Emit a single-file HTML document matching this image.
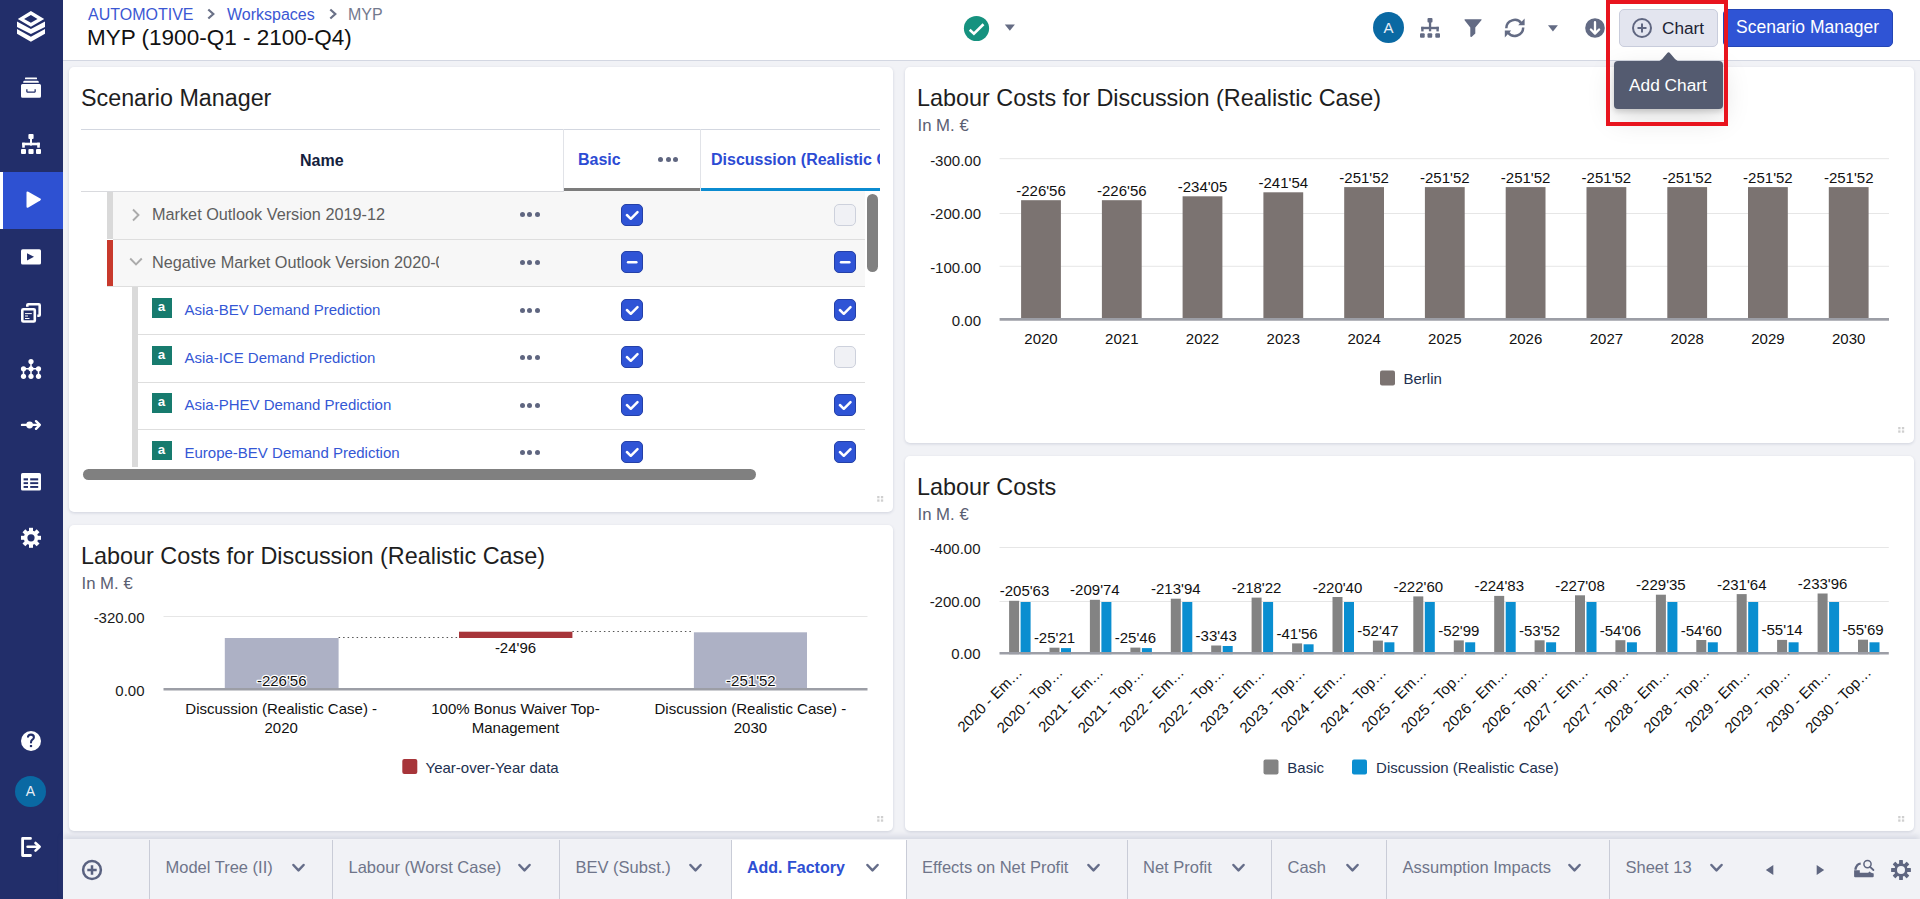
<!DOCTYPE html>
<html><head><meta charset="utf-8">
<style>
*{box-sizing:border-box;margin:0;padding:0}
html,body{width:1920px;height:899px;overflow:hidden;background:#f1f2f6;font-family:"Liberation Sans",sans-serif;color:#111}
.abs{position:absolute}
#sb{position:absolute;left:0;top:0;width:63px;height:899px;background:#222e6a}
#sb .act{position:absolute;left:3px;top:172px;width:60px;height:57px;background:#2e51d2}
#sb .actbar{position:absolute;left:0;top:172px;width:3px;height:57px;background:#fff}
#hdr{position:absolute;left:63px;top:0;width:1857px;height:61px;background:#fff;border-bottom:1px solid #d3d7e2}
.card{position:absolute;background:#fff;border-radius:5px;box-shadow:0 1px 3px rgba(60,70,110,.18)}
.ttl{position:absolute;font-size:23.3px;color:#1e1e1e;white-space:nowrap}
.sub{position:absolute;font-size:15.5px;color:#5b6072;white-space:nowrap}
#bar{position:absolute;left:63px;top:839px;width:1857px;height:60px;background:#f1f2f6;box-shadow:0 -3px 6px rgba(90,100,140,.18)}
.tab{position:absolute;top:838px;height:61px;border-left:1px solid #d3d6df;font-size:16.5px;color:#6b7186;white-space:nowrap}
.t{position:absolute;white-space:nowrap}
.cb{position:absolute;width:22px;height:22px;border-radius:5px;background:#2f54d6;border:1px solid #2440a8}
.cb.u{background:#f0f1f5;border:1px solid #cdd1dc}
.cb svg{position:absolute;left:0;top:0}
.dots{position:absolute;width:21px;height:6px}
.dots i{position:absolute;top:0;width:5px;height:5px;border-radius:50%;background:#5f6680}
.rl{position:absolute;height:1px;background:#dcdde2}
</style></head>
<body>
<div id="sb">
  <div class="actbar"></div><div class="act"></div>
  <svg class="abs" style="left:14px;top:8px" width="34" height="38" viewBox="0 0 34 38" fill="#fff">
    <path fill-rule="evenodd" d="M16.9 3L30.2 11L16.9 18.8L3.8 11Z M16.9 7L10.1 10.9L16.9 14.8L23.5 10.9Z"/>
    <path d="M3 13.5L16.9 21.1L31 13.5L31 19L16.9 26L3 19Z"/>
    <path d="M3 21.1L16.9 28.8L31 21.1L31 25.8L16.9 33.8L3 25.8Z"/>
  </svg>
  <svg class="abs" style="left:16px;top:74px" width="30" height="30" viewBox="0 0 30 30" fill="#fff">
    <rect x="9" y="3.6" width="12" height="1.6" rx=".5"/>
    <path d="M8.6 6.8H21.4Q22.8 6.8 22.8 8.2V8.8H7.2V8.2Q7.2 6.8 8.6 6.8Z"/>
    <path fill-rule="evenodd" d="M6.5 10H23.5Q25 10 25 11.5V22.3Q25 23.8 23.5 23.8H6.5Q5 23.8 5 22.3V11.5Q5 10 6.5 10Z M10.2 15.2V17.6Q10.2 18.7 11.3 18.7H18.7Q19.8 18.7 19.8 17.6V15.2H18.5V17.4H11.5V15.2Z"/>
  </svg>
  <svg class="abs" style="left:16px;top:129px" width="30" height="30" viewBox="0 0 30 30" fill="#fff">
    <rect x="12.4" y="5" width="5.2" height="5" rx="1"/>
    <rect x="14" y="9.5" width="2" height="7"/>
    <rect x="6.2" y="13.7" width="17.6" height="2.6"/>
    <rect x="6.2" y="13.7" width="2.6" height="5"/>
    <rect x="21.2" y="13.7" width="2.6" height="5"/>
    <rect x="5" y="20" width="5" height="5" rx="1"/>
    <rect x="12.4" y="20" width="5.2" height="5" rx="1"/>
    <rect x="20" y="20" width="5" height="5" rx="1"/>
  </svg>
  <svg class="abs" style="left:16px;top:185px" width="30" height="30" viewBox="0 0 30 30" fill="#fff">
    <path d="M10.5 7.8Q10.5 5.8 12.3 6.8L24.2 13.6Q25.8 14.6 24.2 15.6L12.3 22.5Q10.5 23.5 10.5 21.5Z"/>
  </svg>
  <svg class="abs" style="left:16px;top:242px" width="30" height="30" viewBox="0 0 30 30">
    <rect x="5" y="7.3" width="20" height="15.2" rx="1.6" fill="#fff"/>
    <path d="M11 11.3L18 14.8L11 18.5Z" fill="#222e6a"/>
  </svg>
  <svg class="abs" style="left:16px;top:298px" width="30" height="30" viewBox="0 0 30 30" fill="none" stroke="#fff">
    <path d="M11.3 8.8V7.2Q11.3 6.3 12.2 6.3H22.8Q23.7 6.3 23.7 7.2V17Q23.7 17.8 22.8 17.8H21.3" stroke-width="2.6"/>
    <rect x="6.3" y="11.3" width="12.5" height="12.2" rx="1" stroke-width="2.6"/>
    <path d="M9 15.6H15.8M9 18H12M9 20.5H13.5" stroke-width="1"/>
  </svg>
  <svg class="abs" style="left:16px;top:354px" width="30" height="30" viewBox="0 0 30 30" fill="#fff" stroke="#fff">
    <path d="M15 7.5V22.3M7.5 14.8H22.5M7.5 14.8V22.3M22.5 14.8V22.3" stroke-width="1.5"/>
    <circle cx="15" cy="7.5" r="2.6" stroke="none"/><circle cx="15" cy="14.8" r="2.6" stroke="none"/>
    <circle cx="7.5" cy="14.8" r="2.6" stroke="none"/><circle cx="22.5" cy="14.8" r="2.6" stroke="none"/>
    <circle cx="7.5" cy="22.3" r="2.6" stroke="none"/><circle cx="15" cy="22.3" r="2.6" stroke="none"/>
    <circle cx="22.5" cy="22.3" r="2.6" stroke="none"/>
  </svg>
  <svg class="abs" style="left:16px;top:410px" width="30" height="30" viewBox="0 0 30 30" fill="#fff" stroke="#fff">
    <path d="M6 14.9H23" stroke-width="2.4" stroke-linecap="round"/>
    <circle cx="13.6" cy="15" r="3.4" stroke="none"/>
    <path d="M20 11.2L23.8 14.9L20 18.8" stroke-width="2.4" fill="none" stroke-linecap="round" stroke-linejoin="round"/>
  </svg>
  <svg class="abs" style="left:16px;top:467px" width="30" height="30" viewBox="0 0 30 30">
    <rect x="5" y="6" width="20" height="17.6" rx="1.6" fill="#fff"/>
    <g fill="#222e6a"><rect x="7.6" y="11.3" width="4.4" height="2.1"/><rect x="14.2" y="11.3" width="8" height="2.1"/>
    <rect x="7.6" y="15.2" width="4.4" height="1.9"/><rect x="14.2" y="15.2" width="8" height="1.9"/>
    <rect x="7.6" y="19" width="4.4" height="1.9"/><rect x="14.2" y="19" width="8" height="1.9"/></g>
  </svg>
  <svg class="abs" style="left:16px;top:523px" width="30" height="30" viewBox="0 0 30 30">
    <g fill="#fff" transform="translate(15 14.8)">
      <circle r="7.2"/>
      <rect x="-2" y="-10" width="4" height="20"/>
      <rect x="-2" y="-10" width="4" height="20" transform="rotate(45)"/>
      <rect x="-2" y="-10" width="4" height="20" transform="rotate(90)"/>
      <rect x="-2" y="-10" width="4" height="20" transform="rotate(135)"/>
      <circle r="3.6" fill="#222e6a"/>
    </g>
  </svg>
  <svg class="abs" style="left:16px;top:726px" width="30" height="30" viewBox="0 0 30 30">
    <circle cx="15" cy="15" r="10" fill="#fff"/>
    <path d="M12 10.8Q12.5 8.6 15 8.6Q17.9 8.6 17.9 11.2Q17.9 12.7 16.4 13.7Q15 14.6 15 16.5" fill="none" stroke="#222e6a" stroke-width="2.1" stroke-linecap="round"/>
    <rect x="13.9" y="19" width="2.2" height="2.1" fill="#222e6a"/>
  </svg>
  <div class="abs" style="left:15px;top:776px;width:31px;height:31px;border-radius:50%;background:#0a69a3;color:#e8eef6;font-size:14px;text-align:center;line-height:31px">A</div>
  <svg class="abs" style="left:14px;top:830px" width="34" height="34" viewBox="0 0 34 34" fill="none" stroke="#fff" stroke-width="2.8">
    <path d="M16.5 8.4H8.6V25.5H16.5" stroke-linecap="round" stroke-linejoin="round"/>
    <path d="M13.6 16.7H25" stroke-width="2.6" stroke-linecap="round"/>
    <path d="M21.5 13L25.6 16.7L21.5 20.6" stroke-width="2.6" stroke-linecap="round" stroke-linejoin="round"/>
  </svg>
</div>
<div id="hdr"></div>
<div class="t" style="left:88px;top:6.5px;font-size:16px;line-height:16px;color:#3b57d3">AUTOMOTIVE</div>
<svg class="abs" style="left:205px;top:7px" width="12" height="14" viewBox="0 0 12 14"><path d="M3.3 2.5L8.3 7L3.3 11.5" fill="none" stroke="#6b7288" stroke-width="2.2"/></svg>
<div class="t" style="left:227px;top:6.5px;font-size:16px;line-height:16px;color:#3b57d3">Workspaces</div>
<svg class="abs" style="left:327px;top:7px" width="12" height="14" viewBox="0 0 12 14"><path d="M3.3 2.5L8.3 7L3.3 11.5" fill="none" stroke="#6b7288" stroke-width="2.2"/></svg>
<div class="t" style="left:348px;top:6.5px;font-size:16px;line-height:16px;color:#737a8e">MYP</div>
<div class="t" style="left:87px;top:27.3px;font-size:22.5px;line-height:22.5px;color:#111">MYP (1900-Q1 - 2100-Q4)</div>
<svg class="abs" style="left:960px;top:12px" width="60" height="34" viewBox="0 0 60 34">
  <circle cx="16.5" cy="16.5" r="12.6" fill="#16927f"/>
  <path d="M9.7 17.8L13.9 21.6L23.5 12.2" fill="none" stroke="#fff" stroke-width="2.6"/>
  <path d="M44.8 12.5H54.9L49.85 18.7Z" fill="#656c84"/>
</svg>
<div class="abs" style="left:1373px;top:11.5px;width:31px;height:31px;border-radius:50%;background:#0a69a3;color:#e8eef6;font-size:15px;text-align:center;line-height:31px">A</div>
<svg class="abs" style="left:1415px;top:12px" width="200" height="32" viewBox="0 0 200 32" fill="#636b84">
  <rect x="12.5" y="5.9" width="5" height="4.7" rx="1"/>
  <rect x="13.9" y="10" width="2.3" height="9.3"/>
  <rect x="6.2" y="14.8" width="17.6" height="2.4"/>
  <rect x="6.2" y="14.8" width="2.4" height="4.6"/>
  <rect x="21.4" y="14.8" width="2.4" height="4.6"/>
  <rect x="5" y="21.25" width="4.7" height="4.4" rx="1"/>
  <rect x="12.5" y="21.25" width="4.7" height="4.4" rx="1"/>
  <rect x="20.3" y="21.25" width="4.7" height="4.4" rx="1"/>
  <path d="M50 7.2H66.3Q66.9 7.4 66.4 8.3L60.3 15.4V21.5L56.8 24.7Q55.3 25.3 55.3 24V15.4L49.6 8.3Q49.2 7.4 50 7.2Z"/>
  <g fill="none" stroke="#636b84" stroke-width="2.5">
    <path d="M91.3 16.2A8.4 8.4 0 0 1 106.5 11.4"/>
    <path d="M108.2 15.6A8.4 8.4 0 0 1 93 20.4"/>
  </g>
  <path d="M103.2 13.2H109.6V6.4Z"/>
  <path d="M96.2 18.6H89.8V25.4Z"/>
  <path d="M133 13.3H142.9L137.95 19.5Z"/>
  <circle cx="180" cy="15.95" r="9.8"/>
  <path d="M180 10.2V21.6M175.9 17.5L180 21.6L184.1 17.5" fill="none" stroke="#fff" stroke-width="2.3" stroke-linecap="round" stroke-linejoin="round"/>
</svg>
<div class="abs" style="left:1619px;top:9px;width:99px;height:38px;border-radius:5px;background:#e3e5ef;border:1px solid #c9cddc"></div>
<svg class="abs" style="left:1630px;top:16px" width="24" height="24" viewBox="0 0 24 24"><circle cx="12" cy="12" r="9" fill="none" stroke="#5f6680" stroke-width="2"/><path d="M12 7.5V16.5M7.5 12H16.5" stroke="#5f6680" stroke-width="2"/></svg>
<div class="t" style="left:1662px;top:19.7px;font-size:17.2px;line-height:17.2px;color:#1c2233">Chart</div>
<div class="abs" style="left:1723px;top:9px;width:170px;height:38px;border-radius:5px;background:#2f54d5;border:1px solid #2446b5"></div>
<div class="t" style="left:1736px;top:19.2px;font-size:17.5px;line-height:17.5px;color:#fff">Scenario Manager</div>

<div class="card" style="left:69px;top:67px;width:824px;height:445px"></div>
<div class="card" style="left:905px;top:67px;width:1009px;height:376px"></div>
<div class="ttl" style="left:81px;top:87.4px;line-height:23.3px">Scenario Manager</div>
<div class="abs" style="left:81px;top:129px;width:799px;height:1px;background:#d3d7e0"></div>
<div class="abs" style="left:563px;top:129px;width:1px;height:62px;background:#e1e3e8"></div>
<div class="abs" style="left:700px;top:129px;width:1px;height:62px;background:#e1e3e8"></div>
<div class="t" style="left:300px;top:152.5px;font-size:16px;line-height:16px;font-weight:bold;color:#14213d">Name</div>
<div class="t" style="left:578px;top:152.3px;font-size:16px;line-height:16px;font-weight:bold;color:#2c4bd4">Basic</div>
<div class="dots" style="left:658px;top:156.6px"><i style="left:0"></i><i style="left:7.6px"></i><i style="left:15.2px"></i></div>
<div class="abs" style="left:711px;top:140px;width:169px;height:30px;overflow:hidden"><div class="t" style="left:0;top:12.3px;font-size:16px;line-height:16px;font-weight:bold;color:#2c4bd4">Discussion (Realistic Case)</div></div>
<div class="abs" style="left:564px;top:188px;width:136px;height:3px;background:#7c7c7c"></div>
<div class="abs" style="left:701px;top:188px;width:179px;height:3px;background:#0b8bd0"></div>
<div class="rl" style="left:81px;top:191px;width:483px;z-index:2;background:#d9dade"></div>
<div class="abs" style="left:81px;top:191px;width:799px;height:276px;overflow:hidden"><div class="abs" style="left:32px;top:0;width:752px;height:48px;background:#f7f7f7"></div><div class="abs" style="left:26px;top:0;width:6px;height:48px;background:#d9d9d9"></div><div class="rl" style="left:32px;top:48px;width:752px;background:#dedede"></div><div class="abs" style="left:32px;top:49px;width:752px;height:47px;background:#f7f7f7"></div><div class="abs" style="left:26px;top:49px;width:6px;height:47px;background:#c8392c"></div><div class="rl" style="left:26px;top:95px;width:758px;background:#dedede"></div><div class="abs" style="left:51px;top:96px;width:6px;height:200px;background:#dadada"></div><div class="rl" style="left:57px;top:143px;width:727px;background:#dedede"></div><div class="rl" style="left:57px;top:190.5px;width:727px;background:#dedede"></div><div class="rl" style="left:57px;top:238px;width:727px;background:#dedede"></div><svg class="abs" style="left:49px;top:16px" width="12" height="16" viewBox="0 0 12 16"><path d="M3 2.5L8.5 8L3 13.5" fill="none" stroke="#ababab" stroke-width="1.9"/></svg><svg class="abs" style="left:47px;top:64px" width="16" height="14" viewBox="0 0 16 14"><path d="M2.2 3.5L8 9.5L13.8 3.5" fill="none" stroke="#ababab" stroke-width="1.9"/></svg><div class="t" style="left:71px;top:14.96px;font-size:16.25px;line-height:16px;color:#5e5e5e">Market Outlook Version 2019-12</div><div class="abs" style="left:70px;top:59px;width:288px;height:24px;overflow:hidden"><div class="t" style="left:1px;top:4.159999999999997px;font-size:16.25px;line-height:16px;color:#5e5e5e">Negative Market Outlook Version 2020-06</div></div><div class="abs" style="left:71px;top:107px;width:20px;height:19.5px;background:#177b6e;color:#fff;font-family:'Liberation Mono',monospace;font-weight:bold;font-size:13.5px;line-height:20.6px;text-align:center;text-indent:-1px">a</div><div class="t" style="left:103.5px;top:111.0px;font-size:15px;line-height:15px;color:#3457d5">Asia-BEV Demand Prediction</div><div class="abs" style="left:71px;top:154.5px;width:20px;height:19.5px;background:#177b6e;color:#fff;font-family:'Liberation Mono',monospace;font-weight:bold;font-size:13.5px;line-height:20.6px;text-align:center;text-indent:-1px">a</div><div class="t" style="left:103.5px;top:158.5px;font-size:15px;line-height:15px;color:#3457d5">Asia-ICE Demand Prediction</div><div class="abs" style="left:71px;top:202px;width:20px;height:19.5px;background:#177b6e;color:#fff;font-family:'Liberation Mono',monospace;font-weight:bold;font-size:13.5px;line-height:20.6px;text-align:center;text-indent:-1px">a</div><div class="t" style="left:103.5px;top:206.0px;font-size:15px;line-height:15px;color:#3457d5">Asia-PHEV Demand Prediction</div><div class="abs" style="left:71px;top:249.5px;width:20px;height:19.5px;background:#177b6e;color:#fff;font-family:'Liberation Mono',monospace;font-weight:bold;font-size:13.5px;line-height:20.6px;text-align:center;text-indent:-1px">a</div><div class="t" style="left:103.5px;top:253.5px;font-size:15px;line-height:15px;color:#3457d5">Europe-BEV Demand Prediction</div></div>
<div class="abs" style="left:500px;top:191px;width:380px;height:276px;overflow:hidden"><div class="dots" style="left:19.8px;top:21px"><i style="left:0"></i><i style="left:7.6px"></i><i style="left:15.2px"></i></div><div class="cb" style="left:121px;top:13px"><svg width="20" height="20" viewBox="0 0 20 20"><path d="M4.9 10L8.8 13.8L15.5 7.1" fill="none" stroke="#fff" stroke-width="2.5" stroke-linecap="round" stroke-linejoin="round"/></svg></div><div class="cb u" style="left:334px;top:13px"></div><div class="dots" style="left:19.8px;top:68.6px"><i style="left:0"></i><i style="left:7.6px"></i><i style="left:15.2px"></i></div><div class="cb" style="left:121px;top:60px"><svg width="20" height="20" viewBox="0 0 20 20"><path d="M6 10.3H14.4" fill="none" stroke="#fff" stroke-width="2.4" stroke-linecap="round"/></svg></div><div class="cb" style="left:334px;top:60px"><svg width="20" height="20" viewBox="0 0 20 20"><path d="M6 10.3H14.4" fill="none" stroke="#fff" stroke-width="2.4" stroke-linecap="round"/></svg></div><div class="dots" style="left:19.8px;top:116.5px"><i style="left:0"></i><i style="left:7.6px"></i><i style="left:15.2px"></i></div><div class="cb" style="left:121px;top:108px"><svg width="20" height="20" viewBox="0 0 20 20"><path d="M4.9 10L8.8 13.8L15.5 7.1" fill="none" stroke="#fff" stroke-width="2.5" stroke-linecap="round" stroke-linejoin="round"/></svg></div><div class="cb" style="left:334px;top:108px"><svg width="20" height="20" viewBox="0 0 20 20"><path d="M4.9 10L8.8 13.8L15.5 7.1" fill="none" stroke="#fff" stroke-width="2.5" stroke-linecap="round" stroke-linejoin="round"/></svg></div><div class="dots" style="left:19.8px;top:164.0px"><i style="left:0"></i><i style="left:7.6px"></i><i style="left:15.2px"></i></div><div class="cb" style="left:121px;top:155px"><svg width="20" height="20" viewBox="0 0 20 20"><path d="M4.9 10L8.8 13.8L15.5 7.1" fill="none" stroke="#fff" stroke-width="2.5" stroke-linecap="round" stroke-linejoin="round"/></svg></div><div class="cb u" style="left:334px;top:155px"></div><div class="dots" style="left:19.8px;top:211.5px"><i style="left:0"></i><i style="left:7.6px"></i><i style="left:15.2px"></i></div><div class="cb" style="left:121px;top:203px"><svg width="20" height="20" viewBox="0 0 20 20"><path d="M4.9 10L8.8 13.8L15.5 7.1" fill="none" stroke="#fff" stroke-width="2.5" stroke-linecap="round" stroke-linejoin="round"/></svg></div><div class="cb" style="left:334px;top:203px"><svg width="20" height="20" viewBox="0 0 20 20"><path d="M4.9 10L8.8 13.8L15.5 7.1" fill="none" stroke="#fff" stroke-width="2.5" stroke-linecap="round" stroke-linejoin="round"/></svg></div><div class="dots" style="left:19.8px;top:259.0px"><i style="left:0"></i><i style="left:7.6px"></i><i style="left:15.2px"></i></div><div class="cb" style="left:121px;top:250px"><svg width="20" height="20" viewBox="0 0 20 20"><path d="M4.9 10L8.8 13.8L15.5 7.1" fill="none" stroke="#fff" stroke-width="2.5" stroke-linecap="round" stroke-linejoin="round"/></svg></div><div class="cb" style="left:334px;top:250px"><svg width="20" height="20" viewBox="0 0 20 20"><path d="M4.9 10L8.8 13.8L15.5 7.1" fill="none" stroke="#fff" stroke-width="2.5" stroke-linecap="round" stroke-linejoin="round"/></svg></div></div>
<div class="abs" style="left:867px;top:194px;width:11px;height:78px;border-radius:6px;background:#808080"></div>
<div class="abs" style="left:83px;top:469px;width:673px;height:11px;border-radius:6px;background:#808080"></div>
<div class="card" style="left:69px;top:525px;width:824px;height:306px"></div>
<div class="card" style="left:905px;top:456px;width:1009px;height:375px"></div>

<div class="ttl" style="left:917px;top:86.9px;line-height:23.4px;font-size:23.4px">Labour Costs for Discussion (Realistic Case)</div>
<div class="sub" style="left:917.5px;top:117.6px;font-size:16.75px;line-height:16.75px">In M. €</div>
<div class="ttl" style="left:81px;top:545px;line-height:23.4px;font-size:23.4px">Labour Costs for Discussion (Realistic Case)</div>
<div class="sub" style="left:81.5px;top:576px;font-size:16.75px;line-height:16.75px">In M. €</div>
<div class="ttl" style="left:917px;top:476px;line-height:23.4px;font-size:23.4px">Labour Costs</div>
<div class="sub" style="left:917.5px;top:506.5px;font-size:16.75px;line-height:16.75px">In M. €</div>
<svg class="abs" style="left:876.5px;top:495.8px" width="7" height="7" viewBox="0 0 7 7" fill="#cfcfcf"><rect x=".2" y="0" width="2.3" height="2.3"/><rect x="3.9" y="0" width="2.3" height="2.3"/><rect x=".2" y="3.4" width="2.3" height="2.3"/><rect x="3.9" y="3.4" width="2.3" height="2.3"/></svg><svg class="abs" style="left:1898px;top:427px" width="7" height="7" viewBox="0 0 7 7" fill="#cfcfcf"><rect x=".2" y="0" width="2.3" height="2.3"/><rect x="3.9" y="0" width="2.3" height="2.3"/><rect x=".2" y="3.4" width="2.3" height="2.3"/><rect x="3.9" y="3.4" width="2.3" height="2.3"/></svg><svg class="abs" style="left:876.5px;top:816px" width="7" height="7" viewBox="0 0 7 7" fill="#cfcfcf"><rect x=".2" y="0" width="2.3" height="2.3"/><rect x="3.9" y="0" width="2.3" height="2.3"/><rect x=".2" y="3.4" width="2.3" height="2.3"/><rect x="3.9" y="3.4" width="2.3" height="2.3"/></svg><svg class="abs" style="left:1898px;top:816px" width="7" height="7" viewBox="0 0 7 7" fill="#cfcfcf"><rect x=".2" y="0" width="2.3" height="2.3"/><rect x="3.9" y="0" width="2.3" height="2.3"/><rect x=".2" y="3.4" width="2.3" height="2.3"/><rect x="3.9" y="3.4" width="2.3" height="2.3"/></svg>
<!--CHARTS--><svg class="abs" style="left:0;top:0" width="1920" height="899" viewBox="0 0 1920 899"><g><path d="M999.6 158.7H1889" stroke="#e6e6e6" stroke-width="1"/><path d="M999.6 213.5H1889" stroke="#e6e6e6" stroke-width="1"/><path d="M999.6 266.3H1889" stroke="#e6e6e6" stroke-width="1"/><text x="981" y="166.1" text-anchor="end" font-family="Liberation Sans" font-size="15" fill="#1a1a1a">-300.00</text><text x="981" y="219.2" text-anchor="end" font-family="Liberation Sans" font-size="15" fill="#1a1a1a">-200.00</text><text x="981" y="272.9" text-anchor="end" font-family="Liberation Sans" font-size="15" fill="#1a1a1a">-100.00</text><text x="981" y="325.9" text-anchor="end" font-family="Liberation Sans" font-size="15" fill="#1a1a1a">0.00</text><rect x="1021.1" y="200.2" width="39.8" height="119.2" fill="#7b7371"/><text x="1041.0" y="195.8" text-anchor="middle" font-family="Liberation Sans" font-size="15" fill="#111">-226'56</text><text x="1041.0" y="343.7" text-anchor="middle" font-family="Liberation Sans" font-size="15" fill="#111">2020</text><rect x="1101.9" y="200.2" width="39.8" height="119.2" fill="#7b7371"/><text x="1121.8" y="195.8" text-anchor="middle" font-family="Liberation Sans" font-size="15" fill="#111">-226'56</text><text x="1121.8" y="343.7" text-anchor="middle" font-family="Liberation Sans" font-size="15" fill="#111">2021</text><rect x="1182.6" y="196.3" width="39.8" height="123.1" fill="#7b7371"/><text x="1202.5" y="191.9" text-anchor="middle" font-family="Liberation Sans" font-size="15" fill="#111">-234'05</text><text x="1202.5" y="343.7" text-anchor="middle" font-family="Liberation Sans" font-size="15" fill="#111">2022</text><rect x="1263.4" y="192.3" width="39.8" height="127.1" fill="#7b7371"/><text x="1283.3" y="187.9" text-anchor="middle" font-family="Liberation Sans" font-size="15" fill="#111">-241'54</text><text x="1283.3" y="343.7" text-anchor="middle" font-family="Liberation Sans" font-size="15" fill="#111">2023</text><rect x="1344.2" y="187.1" width="39.8" height="132.3" fill="#7b7371"/><text x="1364.1" y="182.7" text-anchor="middle" font-family="Liberation Sans" font-size="15" fill="#111">-251'52</text><text x="1364.1" y="343.7" text-anchor="middle" font-family="Liberation Sans" font-size="15" fill="#111">2024</text><rect x="1424.9" y="187.1" width="39.8" height="132.3" fill="#7b7371"/><text x="1444.8" y="182.7" text-anchor="middle" font-family="Liberation Sans" font-size="15" fill="#111">-251'52</text><text x="1444.8" y="343.7" text-anchor="middle" font-family="Liberation Sans" font-size="15" fill="#111">2025</text><rect x="1505.7" y="187.1" width="39.8" height="132.3" fill="#7b7371"/><text x="1525.6" y="182.7" text-anchor="middle" font-family="Liberation Sans" font-size="15" fill="#111">-251'52</text><text x="1525.6" y="343.7" text-anchor="middle" font-family="Liberation Sans" font-size="15" fill="#111">2026</text><rect x="1586.5" y="187.1" width="39.8" height="132.3" fill="#7b7371"/><text x="1606.4" y="182.7" text-anchor="middle" font-family="Liberation Sans" font-size="15" fill="#111">-251'52</text><text x="1606.4" y="343.7" text-anchor="middle" font-family="Liberation Sans" font-size="15" fill="#111">2027</text><rect x="1667.3" y="187.1" width="39.8" height="132.3" fill="#7b7371"/><text x="1687.2" y="182.7" text-anchor="middle" font-family="Liberation Sans" font-size="15" fill="#111">-251'52</text><text x="1687.2" y="343.7" text-anchor="middle" font-family="Liberation Sans" font-size="15" fill="#111">2028</text><rect x="1748.0" y="187.1" width="39.8" height="132.3" fill="#7b7371"/><text x="1767.9" y="182.7" text-anchor="middle" font-family="Liberation Sans" font-size="15" fill="#111">-251'52</text><text x="1767.9" y="343.7" text-anchor="middle" font-family="Liberation Sans" font-size="15" fill="#111">2029</text><rect x="1828.8" y="187.1" width="39.8" height="132.3" fill="#7b7371"/><text x="1848.7" y="182.7" text-anchor="middle" font-family="Liberation Sans" font-size="15" fill="#111">-251'52</text><text x="1848.7" y="343.7" text-anchor="middle" font-family="Liberation Sans" font-size="15" fill="#111">2030</text><path d="M999.6 319.4H1889" stroke="#9c9ea6" stroke-width="2.6"/><rect x="1380" y="370.5" width="15" height="15" rx="2" fill="#7b7371"/><text x="1403.5" y="384.3" font-family="Liberation Sans" font-size="15" fill="#21304f">Berlin</text></g><path d="M999.5 547.5H1888.8" stroke="#e6e6e6" stroke-width="1"/><path d="M999.5 601.5H1888.8" stroke="#e6e6e6" stroke-width="1"/><text x="980.5" y="554.3" text-anchor="end" font-family="Liberation Sans" font-size="15" fill="#1a1a1a">-400.00</text><text x="980.5" y="607.3" text-anchor="end" font-family="Liberation Sans" font-size="15" fill="#1a1a1a">-200.00</text><text x="980.5" y="658.8" text-anchor="end" font-family="Liberation Sans" font-size="15" fill="#1a1a1a">0.00</text><rect x="1009.1" y="600.8" width="10" height="53.4" fill="#838383"/><rect x="1020.6" y="602.0" width="10" height="52.2" fill="#0a8ed0"/><text x="1024.5" y="596.3" text-anchor="middle" font-family="Liberation Sans" font-size="15" fill="#111">-205'63</text><text x="1023.2" y="673.5" text-anchor="end" transform="rotate(-45 1023.2 673.5)" font-family="Liberation Sans" font-size="15" fill="#111">2020 - Em…</text><rect x="1049.5" y="647.7" width="10" height="6.5" fill="#838383"/><rect x="1061.0" y="648.1" width="10" height="6.1" fill="#0a8ed0"/><text x="1054.5" y="643.2" text-anchor="middle" font-family="Liberation Sans" font-size="15" fill="#111">-25'21</text><text x="1063.6" y="673.5" text-anchor="end" transform="rotate(-45 1063.6 673.5)" font-family="Liberation Sans" font-size="15" fill="#111">2020 - Top…</text><rect x="1089.9" y="599.8" width="10" height="54.4" fill="#838383"/><rect x="1101.4" y="602.0" width="10" height="52.2" fill="#0a8ed0"/><text x="1094.9" y="595.3" text-anchor="middle" font-family="Liberation Sans" font-size="15" fill="#111">-209'74</text><text x="1104.1" y="673.5" text-anchor="end" transform="rotate(-45 1104.1 673.5)" font-family="Liberation Sans" font-size="15" fill="#111">2021 - Em…</text><rect x="1130.4" y="647.6" width="10" height="6.6" fill="#838383"/><rect x="1141.9" y="648.1" width="10" height="6.1" fill="#0a8ed0"/><text x="1135.4" y="643.1" text-anchor="middle" font-family="Liberation Sans" font-size="15" fill="#111">-25'46</text><text x="1144.5" y="673.5" text-anchor="end" transform="rotate(-45 1144.5 673.5)" font-family="Liberation Sans" font-size="15" fill="#111">2021 - Top…</text><rect x="1170.8" y="598.7" width="10" height="55.5" fill="#838383"/><rect x="1182.3" y="602.0" width="10" height="52.2" fill="#0a8ed0"/><text x="1175.8" y="594.2" text-anchor="middle" font-family="Liberation Sans" font-size="15" fill="#111">-213'94</text><text x="1184.9" y="673.5" text-anchor="end" transform="rotate(-45 1184.9 673.5)" font-family="Liberation Sans" font-size="15" fill="#111">2022 - Em…</text><rect x="1211.2" y="645.5" width="10" height="8.7" fill="#838383"/><rect x="1222.7" y="646.0" width="10" height="8.2" fill="#0a8ed0"/><text x="1216.2" y="641.0" text-anchor="middle" font-family="Liberation Sans" font-size="15" fill="#111">-33'43</text><text x="1225.3" y="673.5" text-anchor="end" transform="rotate(-45 1225.3 673.5)" font-family="Liberation Sans" font-size="15" fill="#111">2022 - Top…</text><rect x="1251.6" y="597.6" width="10" height="56.6" fill="#838383"/><rect x="1263.1" y="602.0" width="10" height="52.2" fill="#0a8ed0"/><text x="1256.6" y="593.1" text-anchor="middle" font-family="Liberation Sans" font-size="15" fill="#111">-218'22</text><text x="1265.7" y="673.5" text-anchor="end" transform="rotate(-45 1265.7 673.5)" font-family="Liberation Sans" font-size="15" fill="#111">2023 - Em…</text><rect x="1292.1" y="643.4" width="10" height="10.8" fill="#838383"/><rect x="1303.6" y="644.3" width="10" height="9.9" fill="#0a8ed0"/><text x="1297.1" y="638.9" text-anchor="middle" font-family="Liberation Sans" font-size="15" fill="#111">-41'56</text><text x="1306.2" y="673.5" text-anchor="end" transform="rotate(-45 1306.2 673.5)" font-family="Liberation Sans" font-size="15" fill="#111">2023 - Top…</text><rect x="1332.5" y="597.0" width="10" height="57.2" fill="#838383"/><rect x="1344.0" y="602.0" width="10" height="52.2" fill="#0a8ed0"/><text x="1337.5" y="592.5" text-anchor="middle" font-family="Liberation Sans" font-size="15" fill="#111">-220'40</text><text x="1346.6" y="673.5" text-anchor="end" transform="rotate(-45 1346.6 673.5)" font-family="Liberation Sans" font-size="15" fill="#111">2024 - Em…</text><rect x="1372.9" y="640.6" width="10" height="13.6" fill="#838383"/><rect x="1384.4" y="642.3" width="10" height="11.9" fill="#0a8ed0"/><text x="1377.9" y="636.1" text-anchor="middle" font-family="Liberation Sans" font-size="15" fill="#111">-52'47</text><text x="1387.0" y="673.5" text-anchor="end" transform="rotate(-45 1387.0 673.5)" font-family="Liberation Sans" font-size="15" fill="#111">2024 - Top…</text><rect x="1413.3" y="596.4" width="10" height="57.8" fill="#838383"/><rect x="1424.8" y="602.0" width="10" height="52.2" fill="#0a8ed0"/><text x="1418.3" y="591.9" text-anchor="middle" font-family="Liberation Sans" font-size="15" fill="#111">-222'60</text><text x="1427.4" y="673.5" text-anchor="end" transform="rotate(-45 1427.4 673.5)" font-family="Liberation Sans" font-size="15" fill="#111">2025 - Em…</text><rect x="1453.8" y="640.4" width="10" height="13.8" fill="#838383"/><rect x="1465.2" y="642.3" width="10" height="11.9" fill="#0a8ed0"/><text x="1458.8" y="635.9" text-anchor="middle" font-family="Liberation Sans" font-size="15" fill="#111">-52'99</text><text x="1467.9" y="673.5" text-anchor="end" transform="rotate(-45 1467.9 673.5)" font-family="Liberation Sans" font-size="15" fill="#111">2025 - Top…</text><rect x="1494.2" y="595.9" width="10" height="58.3" fill="#838383"/><rect x="1505.7" y="602.0" width="10" height="52.2" fill="#0a8ed0"/><text x="1499.2" y="591.4" text-anchor="middle" font-family="Liberation Sans" font-size="15" fill="#111">-224'83</text><text x="1508.3" y="673.5" text-anchor="end" transform="rotate(-45 1508.3 673.5)" font-family="Liberation Sans" font-size="15" fill="#111">2026 - Em…</text><rect x="1534.6" y="640.3" width="10" height="13.9" fill="#838383"/><rect x="1546.1" y="642.3" width="10" height="11.9" fill="#0a8ed0"/><text x="1539.6" y="635.8" text-anchor="middle" font-family="Liberation Sans" font-size="15" fill="#111">-53'52</text><text x="1548.7" y="673.5" text-anchor="end" transform="rotate(-45 1548.7 673.5)" font-family="Liberation Sans" font-size="15" fill="#111">2026 - Top…</text><rect x="1575.0" y="595.3" width="10" height="58.9" fill="#838383"/><rect x="1586.5" y="602.0" width="10" height="52.2" fill="#0a8ed0"/><text x="1580.0" y="590.8" text-anchor="middle" font-family="Liberation Sans" font-size="15" fill="#111">-227'08</text><text x="1589.1" y="673.5" text-anchor="end" transform="rotate(-45 1589.1 673.5)" font-family="Liberation Sans" font-size="15" fill="#111">2027 - Em…</text><rect x="1615.4" y="640.2" width="10" height="14.0" fill="#838383"/><rect x="1626.9" y="642.3" width="10" height="11.9" fill="#0a8ed0"/><text x="1620.4" y="635.7" text-anchor="middle" font-family="Liberation Sans" font-size="15" fill="#111">-54'06</text><text x="1629.6" y="673.5" text-anchor="end" transform="rotate(-45 1629.6 673.5)" font-family="Liberation Sans" font-size="15" fill="#111">2027 - Top…</text><rect x="1655.9" y="594.7" width="10" height="59.5" fill="#838383"/><rect x="1667.4" y="602.0" width="10" height="52.2" fill="#0a8ed0"/><text x="1660.9" y="590.2" text-anchor="middle" font-family="Liberation Sans" font-size="15" fill="#111">-229'35</text><text x="1670.0" y="673.5" text-anchor="end" transform="rotate(-45 1670.0 673.5)" font-family="Liberation Sans" font-size="15" fill="#111">2028 - Em…</text><rect x="1696.3" y="640.0" width="10" height="14.2" fill="#838383"/><rect x="1707.8" y="642.3" width="10" height="11.9" fill="#0a8ed0"/><text x="1701.3" y="635.5" text-anchor="middle" font-family="Liberation Sans" font-size="15" fill="#111">-54'60</text><text x="1710.4" y="673.5" text-anchor="end" transform="rotate(-45 1710.4 673.5)" font-family="Liberation Sans" font-size="15" fill="#111">2028 - Top…</text><rect x="1736.7" y="594.1" width="10" height="60.1" fill="#838383"/><rect x="1748.2" y="602.0" width="10" height="52.2" fill="#0a8ed0"/><text x="1741.7" y="589.6" text-anchor="middle" font-family="Liberation Sans" font-size="15" fill="#111">-231'64</text><text x="1750.8" y="673.5" text-anchor="end" transform="rotate(-45 1750.8 673.5)" font-family="Liberation Sans" font-size="15" fill="#111">2029 - Em…</text><rect x="1777.1" y="639.9" width="10" height="14.3" fill="#838383"/><rect x="1788.6" y="642.3" width="10" height="11.9" fill="#0a8ed0"/><text x="1782.1" y="635.4" text-anchor="middle" font-family="Liberation Sans" font-size="15" fill="#111">-55'14</text><text x="1791.2" y="673.5" text-anchor="end" transform="rotate(-45 1791.2 673.5)" font-family="Liberation Sans" font-size="15" fill="#111">2029 - Top…</text><rect x="1817.6" y="593.5" width="10" height="60.7" fill="#838383"/><rect x="1829.1" y="602.0" width="10" height="52.2" fill="#0a8ed0"/><text x="1822.6" y="589.0" text-anchor="middle" font-family="Liberation Sans" font-size="15" fill="#111">-233'96</text><text x="1831.7" y="673.5" text-anchor="end" transform="rotate(-45 1831.7 673.5)" font-family="Liberation Sans" font-size="15" fill="#111">2030 - Em…</text><rect x="1858.0" y="639.7" width="10" height="14.5" fill="#838383"/><rect x="1869.5" y="642.3" width="10" height="11.9" fill="#0a8ed0"/><text x="1863.0" y="635.2" text-anchor="middle" font-family="Liberation Sans" font-size="15" fill="#111">-55'69</text><text x="1872.1" y="673.5" text-anchor="end" transform="rotate(-45 1872.1 673.5)" font-family="Liberation Sans" font-size="15" fill="#111">2030 - Top…</text><path d="M999.5 653.3H1888.8" stroke="#9c9ea6" stroke-width="2.6"/><rect x="1263.5" y="759.5" width="15" height="15" rx="2" fill="#838383"/><text x="1287.3" y="773" font-family="Liberation Sans" font-size="15" fill="#21304f">Basic</text><rect x="1352" y="759.5" width="15" height="15" rx="2" fill="#0a8ed0"/><text x="1376.1" y="773" font-family="Liberation Sans" font-size="15" fill="#21304f">Discussion (Realistic Case)</text><path d="M163.5 616.5H867.5" stroke="#e6e6e6" stroke-width="1"/><text x="144.5" y="623.4" text-anchor="end" font-family="Liberation Sans" font-size="15" fill="#1a1a1a">-320.00</text><text x="144.5" y="695.9" text-anchor="end" font-family="Liberation Sans" font-size="15" fill="#1a1a1a">0.00</text><rect x="224.8" y="638" width="113.8" height="51.5" fill="#adb1c5"/><rect x="459" y="631.7" width="113.4" height="6.3" fill="#a7353a"/><rect x="693.9" y="632.3" width="113.1" height="57.2" fill="#adb1c5"/><path d="M338.6 637.5H459" stroke="#555" stroke-width="1" stroke-dasharray="1.5 3"/><path d="M572.4 631.5H693.9" stroke="#555" stroke-width="1" stroke-dasharray="1.5 3"/><path d="M163.5 689.2H867.5" stroke="#9c9ea6" stroke-width="2.6"/><text x="281.7" y="686.2" text-anchor="middle" font-family="Liberation Sans" font-size="15" fill="#111" stroke="#fff" stroke-width="2.4" stroke-linejoin="round" paint-order="stroke">-226'56</text><text x="515.5" y="653.4" text-anchor="middle" font-family="Liberation Sans" font-size="15" fill="#111">-24'96</text><text x="750.9" y="686" text-anchor="middle" font-family="Liberation Sans" font-size="15" fill="#111" stroke="#fff" stroke-width="2.4" stroke-linejoin="round" paint-order="stroke">-251'52</text><text x="281.2" y="713.9" text-anchor="middle" font-family="Liberation Sans" font-size="15" fill="#111">Discussion (Realistic Case) -</text><text x="281.2" y="733.2" text-anchor="middle" font-family="Liberation Sans" font-size="15" fill="#111">2020</text><text x="515.5" y="713.9" text-anchor="middle" font-family="Liberation Sans" font-size="15" fill="#111">100% Bonus Waiver Top-</text><text x="515.5" y="733.2" text-anchor="middle" font-family="Liberation Sans" font-size="15" fill="#111">Management</text><text x="750.4" y="713.9" text-anchor="middle" font-family="Liberation Sans" font-size="15" fill="#111">Discussion (Realistic Case) -</text><text x="750.4" y="733.2" text-anchor="middle" font-family="Liberation Sans" font-size="15" fill="#111">2030</text><rect x="402.3" y="759.1" width="15" height="15" rx="2" fill="#a7353a"/><text x="425.5" y="773.3" font-family="Liberation Sans" font-size="15" fill="#21304f">Year-over-Year data</text></svg><!--/CHARTS-->
<div id="bar"></div>
<div class="abs" style="left:149px;top:840px;width:1px;height:59px;background:#c9ccd7"></div>
<div class="abs" style="left:332px;top:840px;width:1px;height:59px;background:#c9ccd7"></div>
<div class="abs" style="left:559px;top:840px;width:1px;height:59px;background:#c9ccd7"></div>
<div class="abs" style="left:730.5px;top:840px;width:1px;height:59px;background:#c9ccd7"></div>
<div class="abs" style="left:906px;top:840px;width:1px;height:59px;background:#c9ccd7"></div>
<div class="abs" style="left:1127px;top:840px;width:1px;height:59px;background:#c9ccd7"></div>
<div class="abs" style="left:1270.5px;top:840px;width:1px;height:59px;background:#c9ccd7"></div>
<div class="abs" style="left:1386px;top:840px;width:1px;height:59px;background:#c9ccd7"></div>
<div class="abs" style="left:1609px;top:840px;width:1px;height:59px;background:#c9ccd7"></div>
<div class="abs" style="left:731.5px;top:839.5px;width:174.5px;height:60px;background:#fff"></div>
<svg class="abs" style="left:80px;top:858px" width="24" height="24" viewBox="0 0 24 24"><circle cx="12" cy="12" r="8.9" fill="none" stroke="#5a6280" stroke-width="2.5"/><path d="M12 7.3V16.7M7.3 12H16.7" stroke="#5a6280" stroke-width="2.5"/></svg>
<div class="t" style="left:165.5px;top:859.3px;font-size:16.5px;line-height:16.5px;color:#6f758a">Model Tree (II)</div>
<svg class="abs" style="left:290.5px;top:860px" width="16" height="14" viewBox="0 0 16 14"><path d="M2.4 5L7.5 10.3L12.6 5" fill="none" stroke="#656d89" stroke-width="2.5" stroke-linecap="round" stroke-linejoin="round"/></svg>
<div class="t" style="left:348.5px;top:859.3px;font-size:16.5px;line-height:16.5px;color:#6f758a">Labour (Worst Case)</div>
<svg class="abs" style="left:517.0px;top:860px" width="16" height="14" viewBox="0 0 16 14"><path d="M2.4 5L7.5 10.3L12.6 5" fill="none" stroke="#656d89" stroke-width="2.5" stroke-linecap="round" stroke-linejoin="round"/></svg>
<div class="t" style="left:575.5px;top:859.3px;font-size:16.5px;line-height:16.5px;color:#6f758a">BEV (Subst.)</div>
<svg class="abs" style="left:688.0px;top:860px" width="16" height="14" viewBox="0 0 16 14"><path d="M2.4 5L7.5 10.3L12.6 5" fill="none" stroke="#656d89" stroke-width="2.5" stroke-linecap="round" stroke-linejoin="round"/></svg>
<div class="t" style="left:922px;top:859.3px;font-size:16.5px;line-height:16.5px;color:#6f758a">Effects on Net Profit</div>
<svg class="abs" style="left:1085.5px;top:860px" width="16" height="14" viewBox="0 0 16 14"><path d="M2.4 5L7.5 10.3L12.6 5" fill="none" stroke="#656d89" stroke-width="2.5" stroke-linecap="round" stroke-linejoin="round"/></svg>
<div class="t" style="left:1143px;top:859.3px;font-size:16.5px;line-height:16.5px;color:#6f758a">Net Profit</div>
<svg class="abs" style="left:1230.5px;top:860px" width="16" height="14" viewBox="0 0 16 14"><path d="M2.4 5L7.5 10.3L12.6 5" fill="none" stroke="#656d89" stroke-width="2.5" stroke-linecap="round" stroke-linejoin="round"/></svg>
<div class="t" style="left:1287.5px;top:859.3px;font-size:16.5px;line-height:16.5px;color:#6f758a">Cash</div>
<svg class="abs" style="left:1344.5px;top:860px" width="16" height="14" viewBox="0 0 16 14"><path d="M2.4 5L7.5 10.3L12.6 5" fill="none" stroke="#656d89" stroke-width="2.5" stroke-linecap="round" stroke-linejoin="round"/></svg>
<div class="t" style="left:1402.5px;top:859.3px;font-size:16.5px;line-height:16.5px;color:#6f758a">Assumption Impacts</div>
<svg class="abs" style="left:1567.0px;top:860px" width="16" height="14" viewBox="0 0 16 14"><path d="M2.4 5L7.5 10.3L12.6 5" fill="none" stroke="#656d89" stroke-width="2.5" stroke-linecap="round" stroke-linejoin="round"/></svg>
<div class="t" style="left:1625.5px;top:859.3px;font-size:16.5px;line-height:16.5px;color:#6f758a">Sheet 13</div>
<svg class="abs" style="left:1708.5px;top:860px" width="16" height="14" viewBox="0 0 16 14"><path d="M2.4 5L7.5 10.3L12.6 5" fill="none" stroke="#656d89" stroke-width="2.5" stroke-linecap="round" stroke-linejoin="round"/></svg>
<div class="t" style="left:747px;top:859.8px;font-size:16px;line-height:16px;font-weight:bold;color:#2e4fd3">Add. Factory</div>
<svg class="abs" style="left:865px;top:860px" width="16" height="14" viewBox="0 0 16 14"><path d="M2.4 5L7.5 10.3L12.6 5" fill="none" stroke="#656d89" stroke-width="2.5" stroke-linecap="round" stroke-linejoin="round"/></svg>
<svg class="abs" style="left:1760px;top:860px" width="70" height="20" viewBox="0 0 70 20" fill="#5f6680"><path d="M5.8 5L13.3 10L5.8 15Z" transform="translate(0 0) scale(-1 1) translate(-19.1 0)"/><path d="M56.7 5L64.2 10L56.7 15Z"/></svg>
<svg class="abs" style="left:1845px;top:852px" width="34" height="30" viewBox="0 0 34 30" fill="#5f6680">
<path d="M9.1 18.2H14.8V20.8H23.3L24.3 19.4L26.2 20.8L28.7 21.6V24.2Q28.7 25.2 27.7 25.2H10.1Q9.1 25.2 9.1 24.2Z"/>
<path d="M10.3 17.8Q11.6 11.6 15.7 11.6" fill="none" stroke="#5f6680" stroke-width="2.3"/>
<circle cx="22.5" cy="12.1" r="3.6" fill="none" stroke="#5f6680" stroke-width="1.5"/><path d="M25.1 14.8L28.4 18" stroke="#5f6680" stroke-width="1.8" stroke-linecap="round"/></svg>
<svg class="abs" style="left:1888.8px;top:858px" width="24" height="24" viewBox="0 0 24 24"><g fill="#5f6680" transform="translate(12 12)">
<circle r="6.7"/><rect x="-1.9" y="-9.9" width="3.8" height="19.8" rx=".5"/><rect x="-1.9" y="-9.9" width="3.8" height="19.8" rx=".5" transform="rotate(45)"/>
<rect x="-1.9" y="-9.9" width="3.8" height="19.8" rx=".5" transform="rotate(90)"/><rect x="-1.9" y="-9.9" width="3.8" height="19.8" rx=".5" transform="rotate(135)"/>
<circle r="4" fill="#f1f2f6"/></g></svg>

<div class="abs" style="left:1614px;top:61px;width:109px;height:48px;border-radius:4px;background:#545b70;box-shadow:0 3px 5px rgba(0,0,0,.14),0 10px 28px rgba(0,0,0,.13)"></div>
<svg class="abs" style="left:1656px;top:50px" width="26" height="13" viewBox="0 0 26 13"><path d="M0 11.6Q4 11.6 6.2 9L11.3 2.9Q12.6 1.5 13.9 2.9L19 9Q21.2 11.6 25.2 11.6Z" fill="#545b70"/></svg>
<div class="t" style="left:1629px;top:76.9px;font-size:17.3px;line-height:17.3px;color:#fff">Add Chart</div>
<div class="abs" style="left:1606px;top:-0.2px;width:122px;height:126px;border:4px solid #e8141e"></div>
</body></html>
